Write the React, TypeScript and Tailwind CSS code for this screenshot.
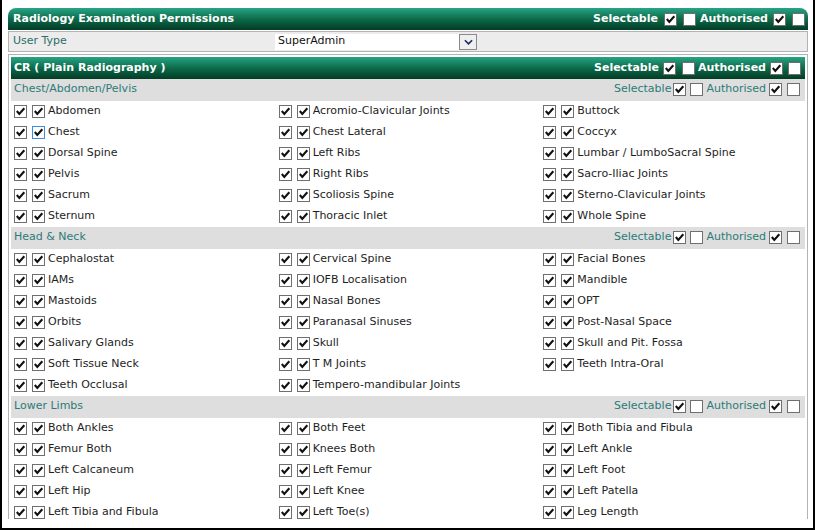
import React from 'react'

type Item = { label: string; focus?: boolean }

const groups: { title: string; items: Item[] }[] = [
  {
    title: 'Chest/Abdomen/Pelvis',
    items: [
      { label: 'Abdomen' }, { label: 'Acromio-Clavicular Joints' }, { label: 'Buttock' },
      { label: 'Chest', focus: true }, { label: 'Chest Lateral' }, { label: 'Coccyx' },
      { label: 'Dorsal Spine' }, { label: 'Left Ribs' }, { label: 'Lumbar / LumboSacral Spine' },
      { label: 'Pelvis' }, { label: 'Right Ribs' }, { label: 'Sacro-Iliac Joints' },
      { label: 'Sacrum' }, { label: 'Scoliosis Spine' }, { label: 'Sterno-Clavicular Joints' },
      { label: 'Sternum' }, { label: 'Thoracic Inlet' }, { label: 'Whole Spine' },
    ],
  },
  {
    title: 'Head & Neck',
    items: [
      { label: 'Cephalostat' }, { label: 'Cervical Spine' }, { label: 'Facial Bones' },
      { label: 'IAMs' }, { label: 'IOFB Localisation' }, { label: 'Mandible' },
      { label: 'Mastoids' }, { label: 'Nasal Bones' }, { label: 'OPT' },
      { label: 'Orbits' }, { label: 'Paranasal Sinuses' }, { label: 'Post-Nasal Space' },
      { label: 'Salivary Glands' }, { label: 'Skull' }, { label: 'Skull and Pit. Fossa' },
      { label: 'Soft Tissue Neck' }, { label: 'T M Joints' }, { label: 'Teeth Intra-Oral' },
      { label: 'Teeth Occlusal' }, { label: 'Tempero-mandibular Joints' },
    ],
  },
  {
    title: 'Lower Limbs',
    items: [
      { label: 'Both Ankles' }, { label: 'Both Feet' }, { label: 'Both Tibia and Fibula' },
      { label: 'Femur Both' }, { label: 'Knees Both' }, { label: 'Left Ankle' },
      { label: 'Left Calcaneum' }, { label: 'Left Femur' }, { label: 'Left Foot' },
      { label: 'Left Hip' }, { label: 'Left Knee' }, { label: 'Left Patella' },
      { label: 'Left Tibia and Fibula' }, { label: 'Left Toe(s)' }, { label: 'Leg Length' },
    ],
  },
]

function Box({ checked = false, focus = false, className = '' }: { checked?: boolean; focus?: boolean; className?: string }) {
  return (
    <span
      className={`inline-flex w-[13px] h-[13px] shrink-0 bg-white border ${
        focus ? 'border-[#3c8fe0]' : 'border-[#6f6f6f]'
      } ${className}`}
    >
      {checked && (
        <svg viewBox="0 0 11 11" className="w-[11px] h-[11px]">
          <path d="M1.8 5 L4.3 7.9 L9.3 2.2" fill="none" stroke="#111" strokeWidth="2.1" />
        </svg>
      )}
    </span>
  )
}

function PermToggles({ variant }: { variant: 'top' | 'cr' | 'sub' }) {
  if (variant === 'sub') {
    return (
      <div className="flex items-center text-[#2c7b78] font-normal">
        <span>Selectable</span>
        <Box checked className="ml-[2px]" />
        <Box className="ml-[4px]" />
        <span className="ml-[3px]">Authorised</span>
        <Box checked className="ml-[3px]" />
        <Box className="ml-[5px]" />
      </div>
    )
  }
  if (variant === 'cr') {
    return (
      <div className="flex items-center text-white font-bold">
        <span>Selectable</span>
        <Box checked className="ml-[4px]" />
        <Box className="ml-[6px]" />
        <span className="ml-[3px]">Authorised</span>
        <Box checked className="ml-[4px]" />
        <Box className="ml-[5px]" />
      </div>
    )
  }
  return (
    <div className="flex items-center text-white font-bold">
      <span>Selectable</span>
      <Box checked className="ml-[6px]" />
      <Box className="ml-[6px]" />
      <span className="ml-[4px]">Authorised</span>
      <Box checked className="ml-[5px]" />
      <Box className="ml-[6px]" />
    </div>
  )
}

export default function App() {
  return (
    <div
      className="w-[815px] h-[530px] bg-white border-l-2 border-r-2 border-b-2 border-black overflow-hidden"
      style={{ fontFamily: '"DejaVu Sans", Verdana, sans-serif' }}
    >
      <div className="pl-[6px] pr-[5px] pt-[8px] h-[519px] overflow-hidden">
        {/* Title bar */}
        <div className="h-[22px] rounded-t-[8px] bg-gradient-to-b from-[#27a585] via-[#0c6b4a] to-[#043c26] flex items-center justify-between pl-[5px] pr-[3px] text-[11px]">
          <span className="text-white font-bold">Radiology Examination Permissions</span>
          <PermToggles variant="top" />
        </div>

        {/* User type */}
        <div className="mt-[1px] h-[21px] border border-[#b3b3b3] bg-[#ececec] flex items-center text-[11px] text-[#2c6d6b]">
          <span className="pl-[4px] w-[266px]">User Type</span>
          <div className="w-[202px] h-[16px] bg-white flex items-center justify-between pl-[3px] text-[#111]">
            <span>SuperAdmin</span>
            <span className="w-[18px] h-[16px] border border-[#8a8a8a] bg-[#efefef] flex items-center justify-center">
              <svg viewBox="0 0 10 6" className="w-[9px] h-[6px]">
                <path d="M1 1 L5 5 L9 1" fill="none" stroke="#1a2a60" strokeWidth="1.8" />
              </svg>
            </span>
          </div>
        </div>

        {/* CR panel */}
        <div className="mt-[2px] border border-[#b3b3b3] p-[2px] h-[600px]">
          <div className="h-[22px] bg-gradient-to-b from-[#27a585] via-[#0c6b4a] to-[#043c26] flex items-center justify-between pl-[3px] pr-[4px] text-[11px]">
            <span className="text-white font-bold">CR ( Plain Radiography )</span>
            <PermToggles variant="cr" />
          </div>

          {groups.map((g) => (
            <div key={g.title}>
              <div className="h-[22px] pb-[2px] bg-[#dedede] flex items-center justify-between pl-[3px] pr-[5px] text-[11px] text-[#2c7b78]">
                <span>{g.title}</span>
                <PermToggles variant="sub" />
              </div>
              <div className="grid grid-cols-3">
                {g.items.map((it) => (
                  <div key={it.label} className="h-[21px] flex items-center pl-[3px] text-[11px] text-[#1e1e1e]">
                    <Box checked />
                    <Box checked focus={it.focus} className="ml-[5px]" />
                    <span className="ml-[3px] whitespace-nowrap">{it.label}</span>
                  </div>
                ))}
              </div>
            </div>
          ))}
        </div>
      </div>
    </div>
  )
}
